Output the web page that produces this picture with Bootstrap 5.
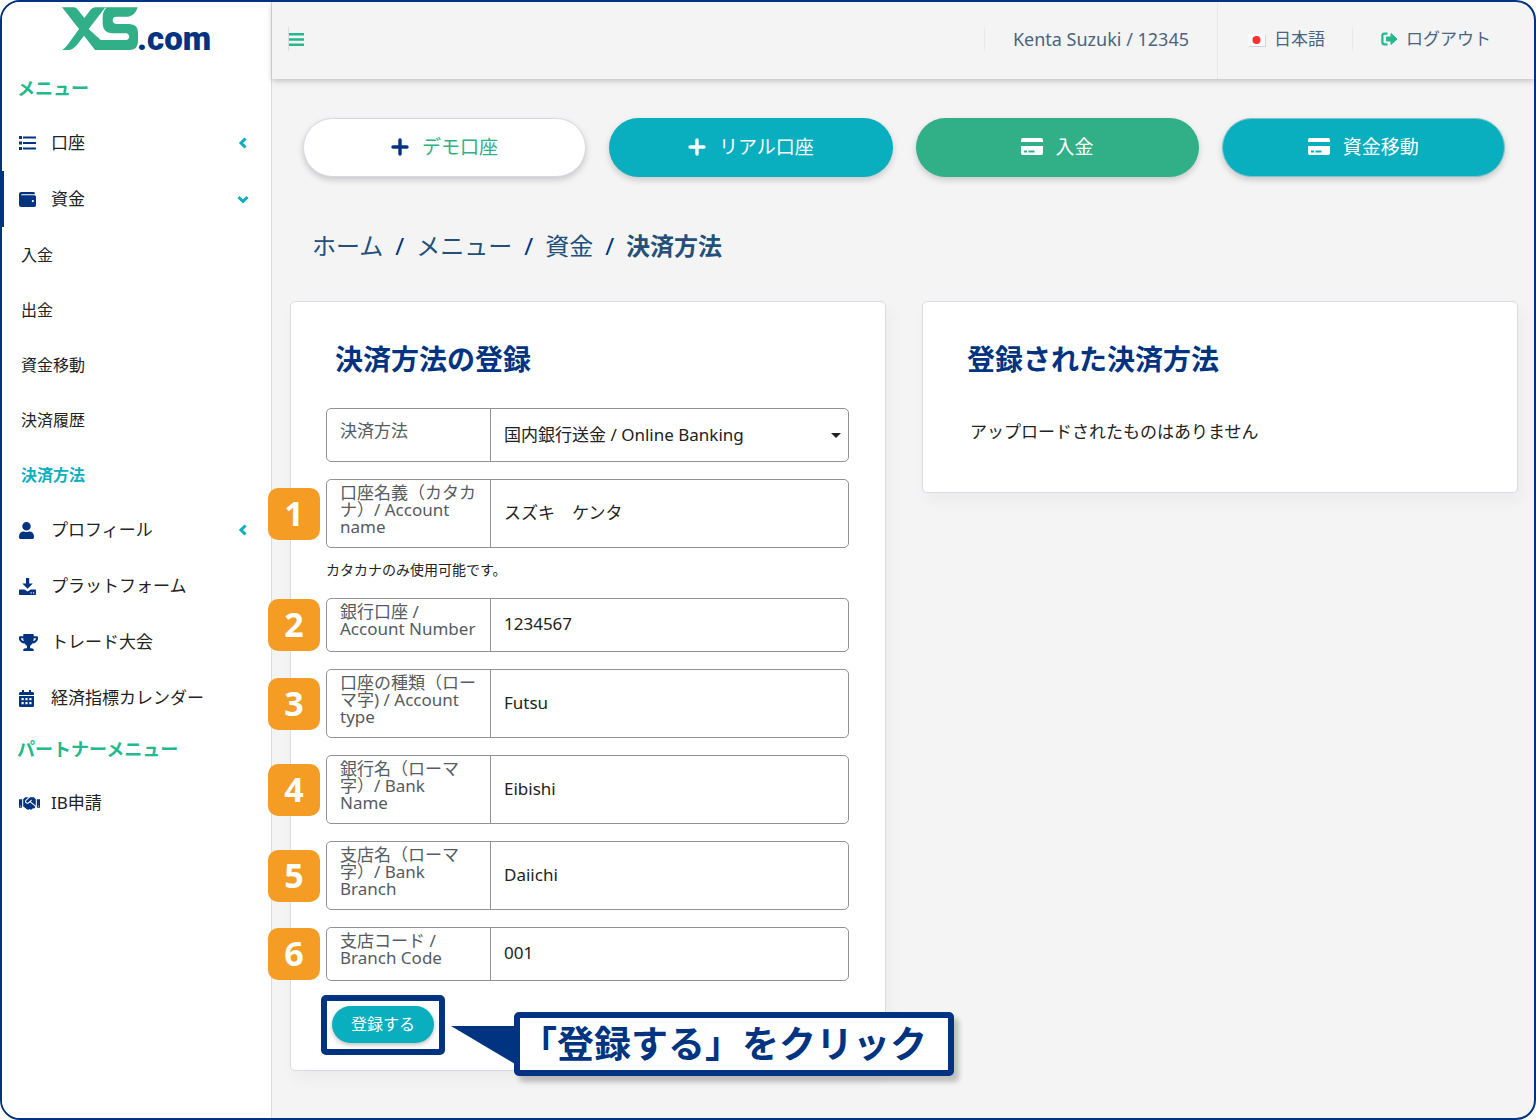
<!DOCTYPE html>
<html lang="ja">
<head>
<meta charset="utf-8">
<meta name="viewport" content="width=device-width, initial-scale=1">
<title>決済方法 | XS.com</title>
<link href="https://cdn.jsdelivr.net/npm/bootstrap@5.3.0/dist/css/bootstrap.min.css" rel="stylesheet">
<style>
:root{--navy:#003380;--green:#22b98c;--logo:#31af86;--teal:#09aebf;--orange:#f59c24;--page:#f4f4f4}
body{font-family:"Noto Sans","Noto Sans CJK JP",sans-serif;font-size:17px;line-height:24px;color:#222;background:#fff}
a{text-decoration:none;color:inherit}
.app-frame{min-height:100vh;border:2px solid var(--navy);border-radius:20px;background:var(--page);overflow:hidden}
.side{width:270px;background:#fff;border-right:1px solid #dcdcde;flex:none}
.brand{height:64px;padding:5px 0 0 60px}
.brand svg{display:block}
.side-head{color:var(--green);font-weight:700;font-size:18px;line-height:24px;padding:0 15px}
.side-head.first{padding-top:10px;padding-bottom:15px}
.side-head.second{margin:11px 0 14px}
.side-link{height:56px;padding:0 22px 0 17px}
.side-link .ico{width:32px;display:flex;flex:none}
.side-link.current{box-shadow:inset 2px 0 0 var(--navy)}
.side-sub{height:55px;padding:0 19px;font-size:16px}
.side-sub.current{color:var(--teal);font-weight:700}
.side svg{fill:var(--navy)}
.side svg.chev{fill:none;stroke:var(--teal);stroke-width:3}
.topbar{height:77px;padding-bottom:4px;color:#4a6480;box-shadow:0 2px 6px rgba(0,0,0,.22);position:relative}
.topbar .sep{width:1px;height:24px;background:#e9e9e9}
.topbar .sep.tall{height:77px;align-self:flex-start}
.topbar .who{font-size:18px}
.topbar .lang{padding:0 27px 0 30px}
.topbar .leave{padding:0 43px 0 28px}
.content{padding:39px 16px 0 18px;position:relative}
.quick{gap:23px;padding:0 13px}
.pill{height:59px;border-radius:30px;border:1px solid transparent;font-size:19px;color:#fff;flex:1 1 0;gap:13px;padding:0 0 2px;box-shadow:0 3px 6px rgba(0,0,0,.18)}
.pill-white{background:#fff;border-color:#d4d9e2;color:var(--logo)}
.pill-teal{background:var(--teal)}
.pill-green{background:var(--logo)}
.pill-edge{border-color:#7cc5cc}
.crumbs{margin:51px 0 37px;padding:0 22px;font-size:24px;line-height:36px;color:#225078;--bs-breadcrumb-item-padding-x:12px;--bs-breadcrumb-divider-color:#003380}
.crumbs .active{color:#225078;font-weight:700}
.crumbs .active::before{font-weight:400}
.panels{gap:36px}
.panel{flex:1 1 0;min-width:0;background:#fff;border:1px solid #d8dce3;border-radius:5px;box-shadow:4px 8px 16px rgba(0,0,0,.04);padding:39px 36px 15px 35px}
.panel h2{font-size:28px;line-height:36px;font-weight:700;color:var(--navy);margin:0 9px 31px}
.field{min-height:54px;border:1px solid #929292;border-radius:5px;margin-bottom:17px;position:relative}
.field label{width:164px;flex:none;border-right:1px solid #929292;padding:4px 12px 12px 13px;line-height:17px;color:#555b61}
.field label.single{padding-top:13px}
.field label.narrow{padding-right:24px}
.field input,.field select{flex:1 1 0;min-width:0;border:0;background:transparent;padding:0 13px 2px;color:#222;appearance:none;outline-offset:-2px}
.field select{padding-bottom:0}
.caret{position:absolute;right:7px;top:24px}
.hint{font-size:14px;line-height:22px;margin:-6px 0 17px}
.step{position:absolute;left:-59px;top:50%;margin-top:-26px;width:52px;height:52px;border-radius:10px;background:var(--orange);color:#fff;font-weight:700;font-size:34px;line-height:50px;text-align:center}
.send{position:relative;display:inline-block;margin:-3px 0 0 -5px}
.ring{border:6px solid var(--navy);border-radius:5px;padding:5px 5px 6px;background:#fff}
.send button{display:block;width:102px;height:37px;border-radius:19px;border:0;background:var(--teal);color:#fff;font-size:16px;line-height:24px;padding:0 0 2px;box-shadow:0 2px 4px rgba(0,0,0,.25)}
.callout{position:absolute;left:193px;top:17px;width:440px;height:64px;border:6px solid var(--navy);border-radius:5px;background:#fff;color:var(--navy);font-size:37px;font-weight:700;line-height:52px;white-space:nowrap;box-shadow:5px 6px 5px rgba(0,0,0,.22);z-index:3}
.callout svg{position:absolute;left:-69px;top:8px;fill:var(--navy)}
.none-yet{margin:43px 12px 33px}
</style>
</head>
<body>
<div class="app-frame d-flex">
  <nav class="side" aria-label="メニュー">
    <a href="#" class="brand d-block" aria-label="XS.com">
      <svg width="180" height="56" viewBox="0 0 180 56">
        <g transform="translate(-62 -7) scale(.3334)"><path fill="#31af86" d="M186 22H222Q229 22 234 30L253 54 271 30Q277 22 285 22H413Q406 46 385 50H348Q338 51 338 61 338 71 348 72H388Q414 73 414 98V125Q413 150 388 150H285L252 107 230 136Q218 150 205 150H186Q195 145 203 134L237 87ZM315 23L266 87 302 120H378Q387 119 387 110 387 101 378 100H336Q309 98 308 72V50Q309 32 319 23Z"/></g>
        <text x="75" y="43" font-family="Roboto,'Noto Sans',sans-serif" font-size="33" font-weight="900" fill="#003380">.com</text>
      </svg>
    </a>
    <div class="side-head first">メニュー</div>
    <a href="#" class="side-link d-flex align-items-center">
      <span class="ico"><svg width="17" height="14" viewBox="0 0 17 14"><path d="M0 0h3v3H0zM0 5.500h3v3H0zM0 11h3v3H0zM4 .5H17v2H4zM4 6H17v2H4zM4 11.500H17v2H4z"/></svg></span>
      <span class="flex-fill">口座</span>
      <svg class="chev" width="12" height="12" viewBox="0 0 12 12"><path d="M8.500 1.500L4 6l4.500 4.500"/></svg>
    </a>
    <a href="#" class="side-link current d-flex align-items-center">
      <span class="ico"><svg width="17" height="17" viewBox="0 0 512 512"><path d="M461.200 128H80c-8.840 0-16-7.160-16-16s7.160-16 16-16h384c8.840 0 16-7.160 16-16 0-26.510-21.490-48-48-48H64C28.650 32 0 60.650 0 96v320c0 35.350 28.650 64 64 64h397.200c28.020 0 50.800-21.530 50.800-48V176c0-26.470-22.780-48-50.800-48zM416 336c-17.670 0-32-14.330-32-32s14.330-32 32-32 32 14.330 32 32-14.330 32-32 32z"/></svg></span>
      <span class="flex-fill">資金</span>
      <svg class="chev" width="12" height="12" viewBox="0 0 12 12"><path d="M1.500 4L6 8.500 10.500 4"/></svg>
    </a>
    <a href="#" class="side-sub d-flex align-items-center">入金</a>
    <a href="#" class="side-sub d-flex align-items-center">出金</a>
    <a href="#" class="side-sub d-flex align-items-center">資金移動</a>
    <a href="#" class="side-sub d-flex align-items-center">決済履歴</a>
    <a href="#" class="side-sub current d-flex align-items-center">決済方法</a>
    <a href="#" class="side-link d-flex align-items-center">
      <span class="ico"><svg width="15" height="17" viewBox="0 0 448 512"><path d="M224 256a128 128 0 1 0 0-256 128 128 0 1 0 0 256zm90 32h-17a174 174 0 0 1-146 0h-17C60 288 0 348 0 422v42c0 26 21 48 48 48h352c26 0 48-22 48-48v-42c0-74-60-134-134-134z"/></svg></span>
      <span class="flex-fill">プロフィール</span>
      <svg class="chev" width="12" height="12" viewBox="0 0 12 12"><path d="M8.500 1.500L4 6l4.500 4.500"/></svg>
    </a>
    <a href="#" class="side-link d-flex align-items-center">
      <span class="ico"><svg width="17" height="17" viewBox="0 0 17 17"><path d="M7 0h3.200v5.500h3.600L8.600 10.800 3.300 5.500H7zM.8 11.500h4.600l3.200 2 3.100-2h4.500q.8 0 .8.800v4q0 .7-.8.700H.8q-.8 0-.8-.7v-4q0-.8.8-.8zM11.500 14.300v1.200h1.200v-1.200zM14 14.300v1.200h1.200v-1.200z" fill-rule="evenodd"/></svg></span>
      <span>プラットフォーム</span>
    </a>
    <a href="#" class="side-link d-flex align-items-center">
      <span class="ico"><svg width="19" height="17" viewBox="0 0 576 512"><path d="M552 64H448V24c0-13.300-10.700-24-24-24H152c-13.300 0-24 10.700-24 24v40H24C10.700 64 0 74.700 0 88v56c0 35.700 22.500 72.400 61.900 100.700 31.500 22.700 69.800 37.100 110 41.700C203.300 338.500 240 360 240 360v72h-48c-35.300 0-64 20.700-64 56v12c0 6.600 5.400 12 12 12h296c6.600 0 12-5.400 12-12v-12c0-35.300-28.700-56-64-56h-48v-72s36.700-21.500 68.100-73.600c40.300-4.600 78.600-19 110-41.700 39.300-28.300 61.900-65 61.900-100.700V88c0-13.300-10.700-24-24-24zM99.300 192.800C74.900 175.200 64 155.600 64 144v-16h64.200c1 32.600 5.800 61.200 12.800 86.200-15.100-5.200-29.200-12.400-41.700-21.400zM512 144c0 16.100-17.700 36.100-35.300 48.800-12.500 9-26.700 16.200-41.800 21.400 7-25 11.800-53.600 12.800-86.200H512v16z"/></svg></span>
      <span>トレード大会</span>
    </a>
    <a href="#" class="side-link d-flex align-items-center">
      <span class="ico"><svg width="15" height="17" viewBox="0 0 15 17"><path fill-rule="evenodd" d="M3 0h2v2h5V0h2v2h1.700Q15 2 15 3.500V5H0V3.500Q0 2 1.300 2H3zM0 6h15v9.500q0 1.500-1.300 1.500H1.300Q0 17 0 15.500zM2.500 8v2.200h2.200V8zM6.400 8v2.200h2.200V8zM10.300 8v2.200h2.200V8zM2.500 12v2.200h2.200V12zM6.400 12v2.200h2.200V12zM10.300 12v2.200h2.200V12z"/></svg></span>
      <span>経済指標カレンダー</span>
    </a>
    <div class="side-head second">パートナーメニュー</div>
    <a href="#" class="side-link d-flex align-items-center">
      <span class="ico"><svg width="21" height="17" viewBox="0 0 640 512"><path d="M434.700 64h-85.900c-8 0-15.700 3-21.600 8.400l-98.300 90c-.1.1-.2.3-.3.4-16.600 15.600-16.300 40.500-2.100 56 12.700 13.900 39.400 17.600 56.100 2.700.1-.1.3-.1.4-.2l79.900-73.200c6.500-5.900 16.700-5.500 22.600 1 6 6.500 5.500 16.600-1 22.600l-26.100 23.900L504 313.800c2.900 2.400 5.500 5 7.900 7.700V128l-54.600-54.600c-5.900-6-14.100-9.400-22.600-9.400zM544 128.200v223.900c0 17.700 14.300 32 32 32h64V128.200h-96zm48 223.900c-8.800 0-16-7.200-16-16s7.200-16 16-16 16 7.200 16 16-7.200 16-16 16zM0 384h64c17.700 0 32-14.300 32-32V128.200H0V384zm48-63.900c8.800 0 16 7.200 16 16s-7.200 16-16 16-16-7.200-16-16c0-8.900 7.200-16 16-16zm435.900 18.600L334.600 217.500l-30 27.500c-29.700 27.100-75.200 24.500-101.700-4.400-26.900-29.400-24.800-74.900 4.400-101.700L289.100 64h-83.800c-8.500 0-16.600 3.400-22.600 9.400L128 128v223.900h18.300l90.500 81.900c27.400 22.300 67.700 18.100 90-9.300l.2-.2 17.900 15.500c15.900 13 39.400 10.500 52.300-5.400l31.400-38.600 5.400 4.400c13.700 11.100 33.900 9.100 45-4.700l9.500-11.700c11.200-13.800 9.100-33.900-4.600-45.100z"/></svg></span>
      <span>IB申請</span>
    </a>
  </nav>

  <div class="flex-fill" style="min-width:0">
    <header class="topbar d-flex align-items-center">
      <button class="btn p-0 border-0 ms-3 d-flex" aria-label="メニューを開閉"><svg width="17" height="24" viewBox="0 0 17 24"><path fill="#ddd" d="M0 0h1v24H0z"/><path fill="#22b98c" d="M1 6h15v2.500H1zM1 11.200h15v2.500H1zM1 16.500h15V19H1z"/></svg></button>
      <div class="ms-auto d-flex align-items-center align-self-stretch">
        <span class="sep"></span>
        <span class="who px-4 mx-1">Kenta Suzuki / 12345</span>
        <span class="sep tall"></span>
        <a href="#" class="lang d-flex align-items-center"><svg class="me-2 mt-1" width="18" height="13" viewBox="0 0 18 13"><path fill="#d5d5d5" d="M1 1h17v12H1z"/><path fill="#fafafa" d="M0 0h17v12H0z"/><circle cx="8.500" cy="6" r="4" fill="#fb3030"/></svg>日本語</a>
        <span class="sep"></span>
        <a href="#" class="leave d-flex align-items-center"><svg class="me-2" width="17" height="14" viewBox="0 0 17 14"><path fill="none" stroke="#22b98c" stroke-width="2.200" d="M6.500 1.600H3.500Q1.400 1.600 1.400 3.500v7q0 1.900 2.100 1.900h3"/><path fill="#22b98c" stroke="#22b98c" stroke-linejoin="round" d="M5.500 5H10V1.500L16 7l-6 5.500V9H5.500z"/></svg>ログアウト</a>
      </div>
    </header>

    <main class="content">
      <div class="quick d-flex">
        <button class="pill pill-white d-flex align-items-center justify-content-center"><svg width="18" height="18" viewBox="0 0 18 18"><path stroke="#003380" stroke-width="3.400" stroke-linecap="round" d="M9 2v14M2 9h14"/></svg>デモ口座</button>
        <button class="pill pill-teal d-flex align-items-center justify-content-center"><svg width="18" height="18" viewBox="0 0 18 18"><path stroke="#fff" stroke-width="3.400" stroke-linecap="round" d="M9 2v14M2 9h14"/></svg>リアル口座</button>
        <button class="pill pill-green d-flex align-items-center justify-content-center"><svg width="22" height="18" viewBox="0 0 22 18"><path fill="#fff" fill-rule="evenodd" d="M2 0h18q2 0 2 2v2H0V2Q0 0 2 0zM0 8h22v7q0 2-2 2H2q-2 0-2-2zM3 12.500v2h3v-2zM7.500 12.500v2h6v-2z"/></svg>入金</button>
        <button class="pill pill-teal pill-edge d-flex align-items-center justify-content-center"><svg width="22" height="18" viewBox="0 0 22 18"><path fill="#fff" fill-rule="evenodd" d="M2 0h18q2 0 2 2v2H0V2Q0 0 2 0zM0 8h22v7q0 2-2 2H2q-2 0-2-2zM3 12.500v2h3v-2zM7.500 12.500v2h6v-2z"/></svg>資金移動</button>
      </div>

      <nav aria-label="パンくず">
        <ol class="breadcrumb crumbs">
          <li class="breadcrumb-item"><a href="#">ホーム</a></li>
          <li class="breadcrumb-item"><a href="#">メニュー</a></li>
          <li class="breadcrumb-item"><a href="#">資金</a></li>
          <li class="breadcrumb-item active" aria-current="page">決済方法</li>
        </ol>
      </nav>

      <div class="panels d-flex align-items-start">
        <section class="panel">
          <h2>決済方法の登録</h2>
          <form>
            <div class="field d-flex">
              <label class="single" for="method">決済方法</label>
              <select id="method"><option>国内銀行送金 / Online Banking</option></select>
              <svg class="caret" width="10" height="5" viewBox="0 0 10 5"><path fill="#222" d="M0 0h10L5 5z"/></svg>
            </div>
            <div class="field d-flex">
              <span class="step">1</span>
              <label for="name">口座名義（カタカナ）/ Account name</label>
              <input id="name" type="text" value="スズキ　ケンタ">
            </div>
            <p class="hint">カタカナのみ使用可能です。</p>
            <div class="field d-flex">
              <span class="step">2</span>
              <label for="number">銀行口座 / Account Number</label>
              <input id="number" type="text" value="1234567">
            </div>
            <div class="field d-flex">
              <span class="step">3</span>
              <label for="kind">口座の種類（ローマ字) / Account type</label>
              <input id="kind" type="text" value="Futsu">
            </div>
            <div class="field d-flex">
              <span class="step">4</span>
              <label class="narrow" for="bank">銀行名（ローマ字）/ Bank Name</label>
              <input id="bank" type="text" value="Eibishi">
            </div>
            <div class="field d-flex">
              <span class="step">5</span>
              <label class="narrow" for="branch">支店名（ローマ字）/ Bank Branch</label>
              <input id="branch" type="text" value="Daiichi">
            </div>
            <div class="field d-flex">
              <span class="step">6</span>
              <label for="code">支店コード / Branch Code</label>
              <input id="code" type="text" value="001">
            </div>
            <div class="send">
              <div class="ring"><button type="button">登録する</button></div>
              <div class="callout"><svg width="64" height="38" viewBox="0 0 64 38"><path d="M0 0H64V38z"/></svg>「登録する」をクリック</div>
            </div>
          </form>
        </section>
        <section class="panel">
          <h2>登録された決済方法</h2>
          <p class="none-yet">アップロードされたものはありません</p>
        </section>
      </div>
    </main>
  </div>
</div>
<script src="https://cdn.jsdelivr.net/npm/bootstrap@5.3.0/dist/js/bootstrap.bundle.min.js"></script>
</body>
</html>
